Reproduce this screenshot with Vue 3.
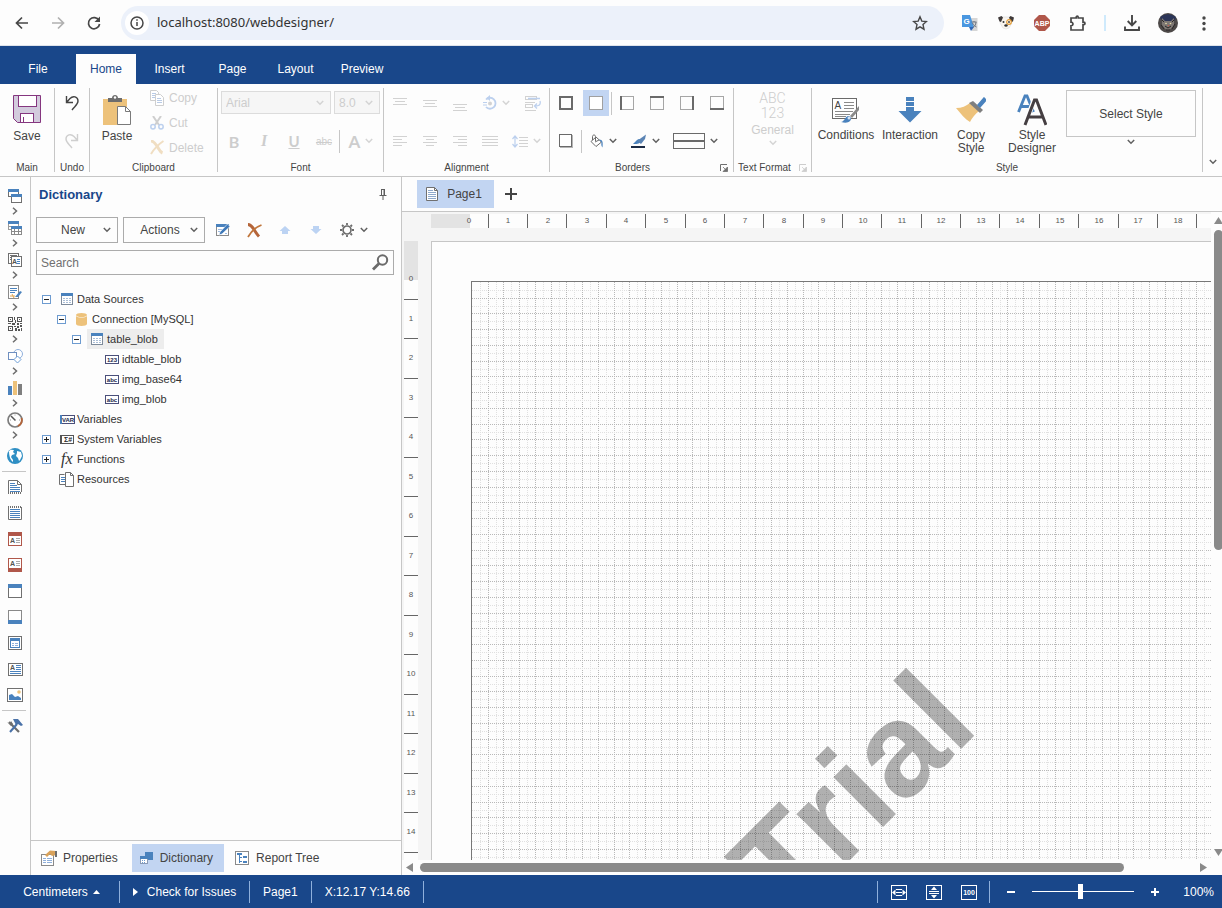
<script setup>
import { h, ref } from 'vue'

const box = (x, y, w, hh, c, f = 'none') =>
  `<rect x="${x + 0.5}" y="${y + 0.5}" width="${w - 1}" height="${hh - 1}" fill="${f}" stroke="${c}"/>`
const bar = (x, y, w, hh, c) => `<rect x="${x}" y="${y}" width="${w}" height="${hh}" fill="${c}"/>`
const rows = (list, c) => list.map(([x, y, w]) => bar(x, y, w, 1, c)).join('')
const tiny = (x, y, t, c, s = 7, extra = '') =>
  `<text x="${x}" y="${y}" font-family="Liberation Sans, Arial, sans-serif" font-size="${s}" font-weight="bold" fill="${c}" ${extra}>${t}</text>`

const G = '#707070'
const B = '#4a82bd'
const D = '#d2d2d2'
const cell = (sides) => box(0, 0, 14, 14, '#a6a6a6') + sides

const icons = {
  back: [16, 16, '<path d="M14 8H3M8 2.5 2.5 8 8 13.5" fill="none" stroke="#474747" stroke-width="1.7"/>'],
  forward: [16, 16, '<path d="M2 8h11M8 2.5 13.500 8 8 13.500" fill="none" stroke="#b0b0b0" stroke-width="1.700"/>'],
  reload: [16, 16, '<path d="M13 5.500A5.600 5.600 0 1 0 13.600 9" fill="none" stroke="#474747" stroke-width="1.700"/><path d="M14 1.500V7H8.500z" fill="#474747"/>'],
  info: [24, 24, '<circle cx="12" cy="12" r="12" fill="#fff"/><circle cx="12" cy="12" r="6" fill="none" stroke="#474747" stroke-width="1.500"/><path d="M12 11v4M12 8.200v1.600" stroke="#474747" stroke-width="1.500"/>'],
  star: [16, 16, '<path d="M8 1.800l1.800 4.300 4.700.4-3.500 3.100 1 4.600L8 11.800l-4 2.400 1-4.600L1.500 6.500l4.700-.4z" fill="none" stroke="#474747" stroke-width="1.400"/>'],
  translate: [18, 18, '<path d="M7 4h9.500v13H11z" fill="#d6d6d6"/><path d="M1 1h8l4 12H1z" fill="#4a97e0"/><path d="M8 13h5l-3 4z" fill="#3367b5"/><path d="M10.500 8h5M13 7v1M15 8c0 3-2 5-3 5M11.500 9c1 2 2 3 4 4" stroke="#6d7480" fill="none"/>' + tiny(2.5, 10, 'G', '#fff', 8)],
  dog: [18, 18, '<path d="M5 3h8l2 6-3 5-3 1-3-1-3-5z" fill="#f8f4ee" stroke="#ddd" stroke-width=".6"/><path d="M1 3.500 4.500 2 6 3.500 4 8 2.500 7.500zM17 3.500 13.500 2 12 3.500 14 8l2-.5z" fill="#3f3a3a"/><circle cx="12" cy="8" r="2.300" fill="#fff" stroke="#e39b32" stroke-width="1.200"/><circle cx="6.500" cy="8" r="1" fill="#333"/><circle cx="12" cy="8" r=".9" fill="#333"/><ellipse cx="9" cy="11.500" rx="1.700" ry="1.200" fill="#333"/>'],
  abp: [16, 16, '<path d="M5 0h6l5 5v6l-5 5H5l-5-5V5z" fill="#b0574a"/>' + tiny(8, 10.5, 'ABP', '#fff', 7, 'text-anchor="middle"')],
  puzzle: [18, 18, '<path d="M2 4h5.200v-.8a1 1 0 0 1 2 0V4H14v4.200h.8a1.200 1.200 0 0 1 0 2.400H14V16H2v-4.200c2.600 0 2.600-3.600 0-3.600z" fill="none" stroke="#474747" stroke-width="1.700"/>'],
  download: [16, 18, '<path d="M8 1v10M3.700 7 8 11.300 12.300 7M1 12.500V16h14v-3.500" fill="none" stroke="#474747" stroke-width="1.900"/>'],
  avatar: [20, 20, '<circle cx="10" cy="10" r="10" fill="#4d4948"/><path d="M2 5C5 0 15 0 18 5l-2 3H5z" fill="#2b3558"/><path d="M4 5l3 3h6l3-3 0 7-3 4-3 1-3-1-3-4z" fill="#7d7773"/><path d="M3 12l3 4M17 11l-3 5M7 13l3 2 3-2M8 17h4M6 9l-2-2M14 9l2-2" stroke="#2a2727" fill="none"/><circle cx="8" cy="10.500" r=".8" fill="#eadfae"/><circle cx="12.500" cy="10.500" r=".8" fill="#eadfae"/><path d="M9.500 12h2l-1 1.500z" fill="#c45645"/>'],
  dots: [4, 16, '<circle cx="2" cy="3" r="1.700" fill="#474747"/><circle cx="2" cy="8.500" r="1.700" fill="#474747"/><circle cx="2" cy="14" r="1.700" fill="#474747"/>'],
  chev: [8, 6, '<path d="M.8 1 4 4.200 7.200 1" fill="none" stroke="currentColor" stroke-width="1.500" stroke-opacity=".85"/>'],
  chevRight: [6, 8, '<path d="M1 .8 4.500 4 1 7.200" fill="none" stroke="#6d6d6d" stroke-width="1.500"/>'],

  save: [28, 28, '<path d="M.5.5h27v27h-23l-4-4z" fill="#d3cbdd" stroke="#85367f"/><rect x="5.500" y=".5" width="18" height="11" fill="#fff" stroke="#85367f"/><rect x="7.500" y="18.500" width="13" height="9" fill="#fff" stroke="#85367f"/><path d="M10.500 22v5" stroke="#85367f"/>'],
  undo: [14, 16, '<path d="M1.500 1v6.500H8M1.500 7.500 5 3.500C8 .5 13 1.500 13 6c0 3.500-3 5-6 9" fill="none" stroke="#444" stroke-width="1.400"/>'],
  redo: [14, 16, '<path d="M12.500 1v6.500H6M12.500 7.500 9 3.500C6 .5 1 1.500 1 6c0 3.500 3 5 6 9" fill="none" stroke="#cfcfcf" stroke-width="1.400"/>'],
  paste: [28, 32, '<path d="M0 5h24v26H0z" fill="#edc27b"/><path d="M5 8V4h4c0-4 6-4 6 0h4v4z" fill="#6d6d6d"/><circle cx="12" cy="3.500" r="1.200" fill="#fff"/><path d="M14.500 12.500h8l5 5v13h-13z" fill="#fff" stroke="#7a7a7a"/><path d="M22.500 12.500v5h5" fill="none" stroke="#7a7a7a"/>'],
  copy: [14, 16, '<path d="M.5.500h6l2 2v8h-8z" fill="#fff" stroke="#cfcfcf"/><path d="M5.500 4.500h5l3 3v8h-8z" fill="#fff" stroke="#cfcfcf"/>' + rows([[2, 3, 4], [2, 5, 3], [2, 7, 3], [7, 8, 4], [7, 10, 5], [7, 12, 5]], '#b9cbe6')],
  cut: [14, 14, '<path d="M3 0 9 9M11 0 5 9" stroke="#cfcfcf" stroke-width="2"/><circle cx="3" cy="10.700" r="2.200" fill="none" stroke="#bcd0ee" stroke-width="1.500"/><circle cx="11" cy="10.700" r="2.200" fill="none" stroke="#bcd0ee" stroke-width="1.500"/>'],
  del: [14, 15, '<path d="M1 1c2 0 4 2 6 5s3 6 5.500 7" stroke="#f0dec2" stroke-width="3" fill="none"/><path d="M13.500 1C9 4 4 9 1 14" stroke="#f0dec2" stroke-width="2" fill="none"/>'],
  remove: [15, 15, '<path d="M1 1.500c3 0 4 2 6 5s3 5 5 7" stroke="#b5653a" stroke-width="3" fill="none"/><path d="M14.500 2C9 4 4 9 1 14" stroke="#c0763c" stroke-width="1.800" fill="none"/>'],

  top: [14, 9, rows([[0, 1, 14], [2, 4, 10], [0, 7, 14]], D)],
  left: [14, 12, rows([[0, 1, 14], [0, 4, 9], [0, 7, 14], [0, 10, 9]], D)],
  center: [14, 12, rows([[0, 1, 14], [3, 4, 8], [0, 7, 14], [3, 10, 8]], D)],
  right: [14, 12, rows([[0, 1, 14], [5, 4, 9], [0, 7, 14], [5, 10, 9]], D)],
  justify: [16, 12, rows([[0, 1, 16], [0, 4, 16], [0, 7, 16], [0, 10, 16]], D)],
  rotate: [14, 16, '<path d="M3 4.500A5.500 5.500 0 1 1 3 12" fill="none" stroke="#bcd0ee" stroke-width="1.800"/><path d="M7 0v6L3.500 3z" fill="#bcd0ee"/><circle cx="7" cy="8.500" r="2" fill="#d2d2d2"/><path d="M0 7.500h4M0 10h4" stroke="#bcd0ee"/>'],
  wrap: [16, 15, box(0, 0, 12, 4, D) + rows([[0, 6, 10], [0, 14, 11]], D) + box(0, 8, 8, 4, D) + '<path d="M3 2.500h12M15 5c1 4-1 5-5 5M12 7.500 9.500 10l2.500 2.500" fill="none" stroke="#bcd0ee" stroke-width="1.300"/>'],
  spacing: [16, 13, rows([[7, 2, 9], [7, 5, 9], [7, 8, 9], [7, 11, 9]], D) + '<path d="M3 2v9M.500 4 3 1l2.500 3M.500 9 3 12l2.500-3" fill="none" stroke="#bcd0ee" stroke-width="1.200"/>'],

  bAll: [14, 14, '<rect x="1" y="1" width="12" height="12" fill="none" stroke="#6a6a6a" stroke-width="2"/>'],
  bNone: [14, 14, box(0, 0, 14, 14, '#a0a0a0', '#fff')],
  bLeft: [14, 14, cell(bar(0, 0, 2, 14, '#6a6a6a'))],
  bTop: [14, 14, cell(bar(0, 0, 14, 2, '#6a6a6a'))],
  bRight: [14, 14, cell(bar(12, 0, 2, 14, '#6a6a6a'))],
  bBottom: [14, 14, cell(bar(0, 12, 14, 2, '#6a6a6a'))],
  bShadow: [14, 14, bar(1, 12, 13, 2, '#b5b5b5') + bar(12, 1, 2, 13, '#b5b5b5') + box(0, 0, 13, 13, '#6a6a6a', '#fff')],
  bucket: [14, 14, '<path d="M1 7.500 6 3l5.500 5L6 12.500z" fill="#fff" stroke="#6a6a6a"/><path d="M2.500 6V2.500C2.500.500 5.500.500 5.500 2.500V7M5 8l4-2" fill="none" stroke="#6a6a6a"/><path d="M9 5.500c4 0 4 3 3.500 8-1-1-1.500-3-1-5z" fill="#4a82bd"/>'],
  pen: [16, 15, bar(0, 12, 14, 2, '#1c2b45') + '<path d="M2 10 6 6c2-2 4-1 4 .500C10 9 7 10.500 2 10z" fill="#4a82bd"/><path d="M6 7 15 .500 14 5l-4 5z" fill="#5b84b4"/>'],
  lineBox: [32, 16, box(0, 0, 32, 16, '#6a6a6a') + bar(0, 7, 32, 2, '#6a6a6a')],
  launch: [8, 8, '<path d="M.500 7V.500H7" fill="none" stroke="currentColor"/><path d="M3 3l3 3M7.500 3v4.500H3z" fill="currentColor" stroke="currentColor" stroke-width=".8"/>'],
  conditions: [28, 26, box(0, 1, 25, 21, '#6a6a6a', '#fff') + rows([[12, 5, 10], [12, 8, 10], [12, 11, 10], [3, 14, 18], [3, 17, 15], [3, 19, 11]], '#8a8a8a') + tiny(2.5, 11.5, 'A', '#444', 10, 'style="font-weight:normal"') + '<path d="M27 9 18 19l2 2 7-8z" fill="#8a8a8a"/><path d="M9 25c3 0 4-5 7-6 3 0 4 3 2 5s-5 2-9 1z" fill="#4a82bd"/><circle cx="17" cy="21" r="1.500" fill="#d9e6f5"/>'],
  interaction: [24, 26, bar(8, 0, 8, 4, B) + bar(8, 5, 8, 4, B) + '<path d="M8 10h8v4h7.500L12 25.500.500 14H8z" fill="#4a82bd"/>'],
  copyStyle: [30, 26, '<path d="M0 11c6 0 10-2 14-5l9 8c-4 3-7 7-9 11C9 22 5 17 0 11z" fill="#edc27b"/><path d="m13 6 4-2 10 9-3 3z" fill="#7f7f7f"/><path d="M22 8 28 1l2 2-6 7z" fill="#4a82bd" stroke="#4a82bd" stroke-width="1.500"/>'],
  styleDesigner: [30, 32, '<path d="M1.500 18 8 2h2l6.500 16M4 12.500h10" fill="none" stroke="#4a82bd" stroke-width="2.800"/><path d="M8 31.500 17 6h3l9 25.500M11 23h15" fill="none" stroke="#fff" stroke-width="5"/><path d="M8 31 17.500 6h2L29 31M11 23h15" fill="none" stroke="#453f42" stroke-width="3"/>'],

  bands: [14, 14, box(0, 0, 11, 8, G, '#fff') + bar(0, 0, 11, 3, B) + box(3, 5, 11, 9, G, '#fff') + bar(3, 5, 11, 3, B)],
  cross: [14, 14, box(0, 0, 11, 9, '#9a9a9a', '#fff') + bar(0, 0, 11, 3, B) + rows([[0, 5, 11]], '#9a9a9a') + box(3, 5, 11, 9, '#8a8a8a', '#fff') + bar(3, 5, 11, 3, B) + bar(3, 10, 11, 1, '#8a8a8a') + bar(6, 8, 1, 6, '#8a8a8a') + bar(10, 8, 1, 6, '#8a8a8a')],
  component: [14, 14, box(0, 0, 11, 11, G, '#fff') + rows([[2, 2, 7], [2, 4, 2], [2, 6, 2]], G) + box(3, 3, 11, 11, G, '#fff') + tiny(4, 11, 'A', '#555', 7) + rows([[9, 6, 3], [9, 8, 3], [9, 10, 3]], B)],
  signature: [15, 14, box(0, 0, 11, 14, '#8a8a8a', '#fff') + rows([[2, 3, 7], [2, 5, 7], [2, 7, 5]], B) + '<path d="M2 11h5M4 9l2 4" stroke="#e0a550"/><path d="M7 12 12 6l2 1-4 5z" fill="#4a82bd"/>'],
  barcode: [14, 14, box(0, 0, 5, 5, '#555') + box(9, 0, 5, 5, '#555') + box(0, 9, 5, 5, '#555') + '<path d="M2 2h1v1H2zM11 2h1v1h-1zM2 11h1v1H2zM6 0h1v3H6zM7 3h1v3H7zM0 6h3v1H0zM4 6h3v2H4zM9 6h2v2H9zM12 6h2v1h-2zM6 9h2v1H6zM7 11h2v3H7zM9 9h2v2H9zM12 8h2v2h-2zM10 12h2v2h-2zM13 11h1v3h-1z" fill="#555"/>'],
  shapes: [15, 15, '<circle cx="10" cy="5" r="4.500" fill="#fff" stroke="#8fb0dc"/>' + '<rect x=".5" y="3.500" width="8" height="7" fill="#fff" stroke="#6f8fc0"/>' + '<path d="M9.500 7 13 10.500 9.500 14 6 10.500z" fill="#fff" stroke="#6fa0d8"/>'],
  chart: [14, 14, bar(0, 5, 4, 9, B) + bar(5, 0, 4, 14, '#edc27b') + bar(10, 3, 4, 11, '#7f7f7f')],
  gauge: [16, 16, '<circle cx="8" cy="8" r="7" fill="#fff" stroke="#7d7d7d" stroke-width="1.700"/><path d="M14.500 6A7 7 0 0 1 11 14" stroke="#b5653a" stroke-width="1.800" fill="none"/><path d="M4 4l4.500 4.500" stroke="#555" stroke-width="1.500"/><path d="M8 2.500v1M3 8h1M12 8h1" stroke="#999"/>'],
  globe: [16, 16, '<circle cx="8" cy="8" r="8" fill="#2f8fc4"/><path d="M2 3c2-2 4-1 5-1l-1 2 2 2-3 1-1 2 2 3v2c-3-2-4-7-4-11zM10 3l4 1 1 4-2 4-1 1-1-3-2-2 1-3z" fill="#fff"/>'],
  headerPage: [14, 14, '<path d="M.500 12V.500h9l4 4V12" fill="#fff" stroke="#707070"/><path d="M9.500.500v4h4" fill="none" stroke="#707070"/><path d="M0 13h14" stroke="#707070" stroke-dasharray="1 1" stroke-width="2"/>' + rows([[2, 3, 5], [2, 5, 7], [2, 7, 10], [2, 9, 10], [2, 11, 10]], B)],
  footerPage: [14, 14, '<path d="M.500 1v12.500h13V1" fill="#fff" stroke="#707070"/><path d="M0 1h14" stroke="#707070" stroke-dasharray="1 1" stroke-width="2"/>' + rows([[2, 3, 10], [2, 5, 10], [2, 7, 10], [2, 9, 10], [2, 11, 10]], B)],
  redHead: [14, 14, box(0, 0, 14, 14, '#b0574a', '#fff') + bar(0, 0, 14, 4, '#b0574a') + tiny(2, 11, 'A', '#555', 7) + rows([[8, 6, 4], [8, 8, 4], [8, 10, 4]], '#aaa')],
  redFoot: [14, 14, box(0, 0, 14, 14, '#b0574a', '#fff') + bar(0, 10, 14, 4, '#b0574a') + tiny(2, 8, 'A', '#555', 7) + rows([[8, 3, 4], [8, 5, 4], [8, 7, 4]], '#aaa')],
  blueHead: [14, 14, box(0, 0, 14, 14, G, '#fff') + bar(0, 0, 14, 4, B)],
  blueFoot: [14, 14, box(0, 0, 14, 14, '#8a8a8a', '#fff') + bar(0, 10, 14, 4, B)],
  dataBand: [14, 14, box(0, 0, 14, 14, G, '#fff') + bar(2, 2, 10, 3, B) + bar(2, 5, 1, 7, B) + bar(11, 5, 1, 7, B) + bar(2, 11, 10, 1, B) + rows([[4, 7, 2], [7, 7, 3], [4, 9, 2], [7, 9, 3]], '#8fb0dc')],
  textComp: [15, 13, box(0, 0, 15, 13, G, '#fff') + tiny(2, 7, 'A', '#555', 7) + rows([[8, 2, 5], [8, 4, 5], [8, 6, 5], [2, 8, 11], [2, 10, 11]], B)],
  image: [16, 14, box(0, 0, 16, 14, G, '#fff') + '<path d="M2 12V7l3-1 3 3 3-1 3 2v2z" fill="#4a82bd"/><circle cx="12" cy="4" r="1.800" fill="#edc27b"/>'],
  tools: [16, 14, '<path d="M2 3l10 10" stroke="#6d6d6d" stroke-width="2.200"/><path d="M0 3l3 2 1-3 2 3-2 2z" fill="#6d6d6d"/><path d="M3 13 10 5" stroke="#4a72a8" stroke-width="2"/><path d="M6 0h5l5 6-2 1-3-2-2 1z" fill="#4a72a8"/>'],

  pin: [8, 11, '<path d="M2.500 1v5M2 .500h4M5 1v5M.500 6.500h7M4 7v4" fill="none" stroke="#5e5e5e"/><path d="M5.500 1v5" stroke="#5e5e5e"/>'],
  edit: [14, 14, box(0, 1, 13, 12, '#8a8a8a', '#fff') + bar(0, 1, 13, 3, B) + rows([[2, 6, 5], [2, 8, 4], [9, 10, 2]], '#9dbbe0') + '<path d="M3 12l1-3 7.500-8L14 3.500 6 11z" fill="#3f79b8" stroke="#fff" stroke-width=".6"/>'],
  up: [12, 8, '<path d="M6 0 11.500 5H9v3H3V5H.500z" fill="#bcd3f3"/>'],
  down: [12, 8, '<path d="M6 8 .500 3H3V0h6v3h2.500z" fill="#bcd3f3"/>'],
  gear: [14, 14, '<circle cx="7" cy="7" r="4" fill="none" stroke="#6d6d6d" stroke-width="1.700"/><path d="M7 0v2M7 12v2M0 7h2M12 7h2M2 2l1.500 1.500M10.500 10.500 12 12M12 2l-1.500 1.500M3.500 10.500 2 12" stroke="#6d6d6d" stroke-width="1.800"/>'],
  search: [17, 17, '<circle cx="10.500" cy="6" r="4.700" fill="none" stroke="#6b6b6b" stroke-width="2"/><path d="M7 9.500 1 15.500" stroke="#6b6b6b" stroke-width="2.800"/>'],
  minus: [9, 9, box(0, 0, 9, 9, '#6d9bd0', '#fff') + bar(2, 4, 5, 1, '#222')],
  plus: [9, 9, box(0, 0, 9, 9, '#6d9bd0', '#fff') + bar(2, 4, 5, 1, '#222') + bar(4, 2, 1, 5, '#222')],
  table: [12, 12, box(0, 0, 12, 12, '#7d8a9a', '#fff') + bar(0, 0, 12, 3, B) + [5, 7, 9].map((y) => rows([[2, y, 2], [5, y, 2], [8, y, 2]], '#a9bdd6')).join('')],
  db: [12, 13, '<path d="M0 3v8c0 2.500 11 2.500 11 0V3c-2 2-9 2-11 0z" fill="#edc27b"/><ellipse cx="5.500" cy="2" rx="5.500" ry="2" fill="#edc27b"/>'],
  t123: [14, 9, box(0, 0, 14, 9, '#4a4f7a', '#fff') + tiny(7, 7, '123', '#22264a', 6, 'text-anchor="middle"')],
  tabc: [14, 9, box(0, 0, 14, 9, '#4a4f7a', '#fff') + tiny(7, 7, 'abc', '#22264a', 6, 'text-anchor="middle"')],
  tvar: [15, 9, box(0, 0, 15, 9, '#4a4f7a', '#fff') + bar(0, 0, 2, 9, B) + tiny(8, 7, 'VAR', '#22264a', 6, 'text-anchor="middle"')],
  tsys: [14, 9, box(0, 0, 14, 9, '#555', '#fff') + bar(0, 0, 2, 9, '#555') + tiny(8, 7, 'Σ#', '#222', 7, 'text-anchor="middle"')],
  fx: [16, 20, '<text x="2" y="15" font-family="Liberation Serif, Times New Roman, serif" font-style="italic" font-size="16" fill="#333">fx</text>'],
  resources: [16, 15, '<path d="M5.500 2.500h-5v10h7" fill="#fff" stroke="#707070"/>' + rows([[2, 5, 4], [2, 7, 4], [2, 9, 4]], B) + '<path d="M6.500.500h5l3 3v11h-8z" fill="#fff" stroke="#707070"/><path d="M11.500.500v3h3" fill="none" stroke="#707070"/>'],
  page: [12, 14, '<path d="M.500.500h8l3 3v10H.500z" fill="#fff" stroke="#707070"/><path d="M8.500.500v3h3" fill="none" stroke="#707070"/>' + rows([[2, 3, 5], [2, 5, 8], [2, 7, 8], [2, 9, 8], [2, 11, 8]], '#8fa9cc')],
  add: [12, 12, bar(5, 0, 2, 12, '#444') + bar(0, 5, 12, 2, '#444')],
  properties: [16, 16, box(0, 4, 13, 12, '#8a8a8a', '#fff') + rows([[2, 8, 3], [6, 8, 5], [2, 10, 3], [6, 10, 5], [2, 12, 3], [6, 12, 5]], '#8fb0dc') + '<path d="M4 5 9 .500 15 1v4l-4 1-2-2-3 3z" fill="#d9a25a"/><path d="M14 1h2v6h-2z" fill="#6d6d6d"/>'],
  dictionary: [13, 13, bar(5, 0, 8, 7, B) + box(5, 0, 8, 8, B) + box(0, 4, 8, 8, '#8a9ab5', '#fff') + bar(0, 4, 8, 3, B) + rows([[2, 8, 1], [4, 8, 1], [2, 10, 1], [4, 10, 1]], '#6d9bd0')],
  tree: [14, 14, box(0, 0, 14, 14, '#8a8a8a', '#fff') + bar(2, 2, 5, 2, B) + bar(4, 4, 1, 8, B) + bar(4, 6, 3, 1, B) + bar(4, 10, 3, 1, B) + bar(8, 5, 4, 2, B) + bar(8, 10, 4, 2, B)],

  caretUp: [7, 4, '<path d="M0 4 3.500 0 7 4z" fill="#fff"/>'],
  caretRight: [5, 8, '<path d="M0 0 5 4 0 8z" fill="#fff"/>'],
  fitWidth: [16, 16, box(0, 1, 16, 15, '#fff') + rows([[5, 5, 6], [5, 8, 6], [5, 11, 6]], '#fff') + '<path d="M4.500 5.500v6L1 8.500zM11.500 5.500v6L15 8.500z" fill="#fff"/>'],
  fitPage: [16, 16, box(0, 1, 16, 15, '#fff') + rows([[3, 7, 10], [3, 9, 10]], '#fff') + '<path d="M5 6h6L8 2.500zM5 11h6l-3 3.500z" fill="#fff"/>'],
  zoom100: [16, 16, box(0, 1, 16, 15, '#fff') + tiny(8, 11, '100', '#fff', 7, 'text-anchor="middle"')],
  zoomOut: [8, 8, bar(0, 3, 8, 2, '#fff')],
  zoomIn: [8, 8, bar(0, 3, 8, 2, '#fff') + bar(3, 0, 2, 8, '#fff')],
  sUp: [9, 7, '<path d="M0 7 4.500 0 9 7z" fill="#8a8a8a"/>'],
  sDown: [9, 7, '<path d="M0 0h9L4.500 7z" fill="#8a8a8a"/>'],
  sLeft: [7, 9, '<path d="M7 0v9L0 4.500z" fill="#8a8a8a"/>'],
  sRight: [7, 9, '<path d="M0 0v9l7-4.500z" fill="#8a8a8a"/>'],
}

const Ic = (props) => {
  const [w, hh, body] = icons[props.n]
  return h('svg', { class: 'ic', width: w, height: hh, viewBox: `0 0 ${w} ${hh}`, 'aria-hidden': 'true', innerHTML: body })
}
Ic.props = ['n']

const menu = ['File', 'Home', 'Insert', 'Page', 'Layout', 'Preview']
const insertTools = ['bands', 'cross', 'component', 'signature', 'barcode', 'shapes', 'chart', 'gauge']
const bandTools = ['headerPage', 'footerPage', 'redHead', 'redFoot', 'blueHead', 'blueFoot', 'dataBand', 'textComp', 'image']
const tree = [
  { level: 0, toggle: 'minus', icon: 'table', text: 'Data Sources' },
  { level: 1, toggle: 'minus', icon: 'db', text: 'Connection [MySQL]' },
  { level: 2, toggle: 'minus', icon: 'table', text: 'table_blob', on: true },
  { level: 3, icon: 't123', text: 'idtable_blob' },
  { level: 3, icon: 'tabc', text: 'img_base64' },
  { level: 3, icon: 'tabc', text: 'img_blob' },
  { level: 0, icon: 'tvar', text: 'Variables' },
  { level: 0, toggle: 'plus', icon: 'tsys', text: 'System Variables' },
  { level: 0, toggle: 'plus', icon: 'fx', text: 'Functions' },
  { level: 0, icon: 'resources', text: 'Resources' },
]

const ruler = (count, cm) =>
  Array.from({ length: count }, (_, i) => ({ n: i, label: Math.round(i * cm), tick: Math.round((i + 0.5) * cm) }))
const marksX = ruler(19, 39.37)
const marksY = ruler(15, 39.5)
const gridLines = Array.from({ length: 300 }, (_, i) => ({ at: Math.round((i + 1) * 7.874) + 0.5, major: i % 2 === 1 }))

const url = ref('localhost:8080/webdesigner/')
const query = ref('')
const zoom = ref(47)
</script>

<template>
  <div class="app">
    <header class="browser">
      <button class="nav" aria-label="Back"><Ic n="back" /></button>
      <button class="nav" aria-label="Forward"><Ic n="forward" /></button>
      <button class="nav" aria-label="Reload"><Ic n="reload" /></button>
      <div class="address">
        <Ic n="info" />
        <input v-model="url" type="text" aria-label="Address" />
        <button class="nav" aria-label="Bookmark"><Ic n="star" /></button>
      </div>
      <button class="nav" aria-label="Translate"><Ic n="translate" /></button>
      <button class="nav" aria-label="Dog extension"><Ic n="dog" /></button>
      <button class="nav" aria-label="Ad blocker"><Ic n="abp" /></button>
      <button class="nav" aria-label="Extensions"><Ic n="puzzle" /></button>
      <span class="nav-sep"></span>
      <button class="nav" aria-label="Downloads"><Ic n="download" /></button>
      <button class="nav" aria-label="Profile"><Ic n="avatar" /></button>
      <button class="nav" aria-label="Browser menu"><Ic n="dots" /></button>
    </header>

    <nav class="menu">
      <button v-for="m in menu" :key="m" :class="{ on: m === 'Home', file: m === 'File', preview: m === 'Preview' }">{{ m }}</button>
    </nav>

    <div class="ribbon">
      <section class="group g-main">
        <div class="body"><button class="big"><Ic n="save" /><span>Save</span></button></div>
        <h2>Main</h2>
      </section>
      <i class="sep"></i>
      <section class="group g-undo">
        <div class="body col">
          <button class="cell" aria-label="Undo"><Ic n="undo" /></button>
          <button class="cell" aria-label="Redo" disabled><Ic n="redo" /></button>
        </div>
        <h2>Undo</h2>
      </section>
      <i class="sep"></i>
      <section class="group g-clip">
        <div class="body">
          <button class="big"><Ic n="paste" /><span>Paste</span></button>
          <div class="clip-list">
            <button disabled><Ic n="copy" />Copy</button>
            <button disabled><Ic n="cut" />Cut</button>
            <button disabled><Ic n="del" />Delete</button>
          </div>
        </div>
        <h2>Clipboard</h2>
      </section>
      <i class="sep"></i>
      <section class="group g-font">
        <div class="body col">
          <div class="line selects">
            <div class="pick wide"><select aria-label="Font name" disabled><option>Arial</option></select><Ic n="chev" /></div>
            <div class="pick"><select aria-label="Font size" disabled><option>8.0</option></select><Ic n="chev" /></div>
          </div>
          <div class="line dim">
            <button class="cell f-b" disabled>B</button>
            <button class="cell f-i" disabled>I</button>
            <button class="cell f-u" disabled>U</button>
            <button class="cell f-s" disabled>abc</button>
            <i class="vsep"></i>
            <button class="cell f-a" disabled>A<Ic n="chev" /></button>
          </div>
        </div>
        <h2>Font</h2>
      </section>
      <i class="sep"></i>
      <section class="group g-align">
        <div class="body col">
          <div class="line dim">
            <button class="cell v-top" aria-label="Align top" disabled><Ic n="top" /></button>
            <button class="cell" aria-label="Align middle" disabled><Ic n="top" /></button>
            <button class="cell v-bot" aria-label="Align bottom" disabled><Ic n="top" /></button>
            <button class="cell drop" aria-label="Text angle" disabled><Ic n="rotate" /><Ic n="chev" /></button>
            <button class="cell" aria-label="Word wrap" disabled><Ic n="wrap" /></button>
          </div>
          <div class="line dim">
            <button class="cell" aria-label="Align left" disabled><Ic n="left" /></button>
            <button class="cell" aria-label="Align centre" disabled><Ic n="center" /></button>
            <button class="cell" aria-label="Align right" disabled><Ic n="right" /></button>
            <button class="cell" aria-label="Justify" disabled><Ic n="justify" /></button>
            <button class="cell drop" aria-label="Line spacing" disabled><Ic n="spacing" /><Ic n="chev" /></button>
          </div>
        </div>
        <h2>Alignment</h2>
      </section>
      <i class="sep"></i>
      <section class="group g-borders">
        <div class="body col">
          <div class="line">
            <button class="cell" aria-label="All borders"><Ic n="bAll" /></button>
            <button class="cell picked" aria-label="No border"><Ic n="bNone" /></button>
            <i class="vsep"></i>
            <button class="cell" aria-label="Left border"><Ic n="bLeft" /></button>
            <button class="cell" aria-label="Top border"><Ic n="bTop" /></button>
            <button class="cell" aria-label="Right border"><Ic n="bRight" /></button>
            <button class="cell" aria-label="Bottom border"><Ic n="bBottom" /></button>
          </div>
          <div class="line">
            <button class="cell" aria-label="Shadow"><Ic n="bShadow" /></button>
            <i class="vsep"></i>
            <button class="cell drop" aria-label="Fill colour"><Ic n="bucket" /><Ic n="chev" /></button>
            <button class="cell drop" aria-label="Border colour"><Ic n="pen" /><Ic n="chev" /></button>
            <button class="cell drop style" aria-label="Border style"><Ic n="lineBox" /><Ic n="chev" /></button>
          </div>
        </div>
        <h2><span>Borders</span><button class="launch" aria-label="Border settings"><Ic n="launch" /></button></h2>
      </section>
      <i class="sep"></i>
      <section class="group g-format">
        <div class="body">
          <button class="format" disabled>
            <b>ABC</b><b>123</b><span>General</span><Ic n="chev" />
          </button>
        </div>
        <h2><span>Text Format</span><button class="launch off" aria-label="Format settings" disabled><Ic n="launch" /></button></h2>
      </section>
      <i class="sep"></i>
      <section class="group g-style">
        <div class="body">
          <button class="big"><Ic n="conditions" /><span>Conditions</span></button>
          <button class="big"><Ic n="interaction" /><span>Interaction</span></button>
          <button class="big copy"><Ic n="copyStyle" /><span>Copy<br />Style</span></button>
          <button class="big"><Ic n="styleDesigner" /><span>Style<br />Designer</span></button>
          <div class="select-style">
            <button class="style-box">Select Style</button>
            <button class="style-more" aria-label="More styles"><Ic n="chev" /></button>
          </div>
        </div>
        <h2>Style</h2>
      </section>
      <i class="sep"></i>
      <button class="collapse" aria-label="Collapse ribbon"><Ic n="chev" /></button>
    </div>

    <main class="work">
      <aside class="toolbox">
        <button v-for="t in insertTools" :key="t" class="tool" :aria-label="t"><span><Ic :n="t" /></span><Ic n="chevRight" /></button>
        <button class="tool globe" aria-label="Map"><Ic n="globe" /></button>
        <hr />
        <button v-for="t in bandTools" :key="t" class="band" :aria-label="t"><Ic :n="t" /></button>
        <hr />
        <button class="band" aria-label="Setup toolbox"><Ic n="tools" /></button>
      </aside>

      <section class="panel">
        <div class="panel-title"><h1>Dictionary</h1><button aria-label="Pin panel"><Ic n="pin" /></button></div>
        <div class="panel-bar">
          <button class="menu-btn"><span>New</span><Ic n="chev" /></button>
          <button class="menu-btn"><span>Actions</span><Ic n="chev" /></button>
          <button class="act" aria-label="Edit"><Ic n="edit" /></button>
          <button class="act" aria-label="Delete"><Ic n="remove" /></button>
          <button class="act" aria-label="Move up" disabled><Ic n="up" /></button>
          <button class="act" aria-label="Move down" disabled><Ic n="down" /></button>
          <button class="act settings" aria-label="Settings"><Ic n="gear" /><Ic n="chev" /></button>
        </div>
        <div class="search">
          <input v-model="query" type="text" placeholder="Search" aria-label="Search" />
          <button aria-label="Find"><Ic n="search" /></button>
        </div>
        <ul class="tree">
          <li v-for="r in tree" :key="r.text" :class="'level-' + r.level">
            <span class="toggle"><Ic v-if="r.toggle" :n="r.toggle" /></span>
            <span class="node" :class="{ on: r.on }"><span class="node-icon"><Ic :n="r.icon" /></span>{{ r.text }}</span>
          </li>
        </ul>
        <div class="tabs">
          <button><Ic n="properties" />Properties</button>
          <button class="on"><Ic n="dictionary" />Dictionary</button>
          <button><Ic n="tree" />Report Tree</button>
        </div>
      </section>

      <section class="designer">
        <div class="pages">
          <button class="page-tab"><Ic n="page" />Page1</button>
          <button class="page-add" aria-label="Add page"><Ic n="add" /></button>
        </div>
        <div class="stage">
          <div class="view">
            <svg class="ruler-x">
              <rect width="39" height="14" fill="#e3e3e3" />
              <g v-for="m in marksX" :key="m.n">
                <text :x="m.label + 38" y="9">{{ m.n }}</text>
                <rect :x="m.tick + 37" y="0" width="1" height="14" />
              </g>
            </svg>
            <svg class="ruler-y">
              <rect width="14" height="39" fill="#e3e3e3" />
              <g v-for="m in marksY" :key="m.n">
                <text x="7" :y="m.label + 40">{{ m.n }}</text>
                <rect x="0" :y="m.tick + 38" width="14" height="1" />
              </g>
            </svg>
            <div class="sheet">
              <svg class="sheet-body">
                <g>
                  <template v-for="l in gridLines" :key="l.at">
                    <line :class="{ major: l.major }" :x1="l.at" y1="0" :x2="l.at" y2="100%" />
                    <line :class="{ major: l.major }" x1="0" :y1="l.at" x2="100%" :y2="l.at" />
                  </template>
                </g>
                <text class="mark" transform="translate(509 447) rotate(-45)">Trial</text>
              </svg>
            </div>
          </div>
          <div class="scroll-y"><Ic n="sUp" /><span></span><Ic n="sDown" /></div>
          <div class="scroll-x"><Ic n="sLeft" /><div><span></span></div><Ic n="sRight" /></div>
        </div>
      </section>
    </main>

    <footer class="status">
      <button class="units">Centimeters<Ic n="caretUp" /></button>
      <i></i>
      <button class="issues"><Ic n="caretRight" />Check for Issues</button>
      <i></i>
      <span class="crumb">Page1</span>
      <i></i>
      <span class="crumb">X:12.17 Y:14.66</span>
      <i></i>
      <div class="spacer"></div>
      <i></i>
      <div class="fits">
        <button aria-label="Fit width"><Ic n="fitWidth" /></button>
        <button aria-label="Fit page"><Ic n="fitPage" /></button>
        <button aria-label="Actual size"><Ic n="zoom100" /></button>
      </div>
      <i></i>
      <button class="step" aria-label="Zoom out"><Ic n="zoomOut" /></button>
      <input v-model="zoom" class="slider" type="range" min="0" max="100" aria-label="Zoom" />
      <button class="step" aria-label="Zoom in"><Ic n="zoomIn" /></button>
      <span class="percent">100%</span>
    </footer>
  </div>
</template>

<style>
body {
  overflow: hidden;
  background: #fdfdfd;
}
</style>

<style scoped>
.app {
  height: 100vh;
  display: flex;
  flex-direction: column;
  font-family: 'Liberation Sans', Arial, sans-serif;
  font-size: 12px;
  color: #444;
  background: #fdfdfd;
}
button {
  display: flex;
  align-items: center;
  justify-content: center;
  padding: 0;
  border: 0;
  background: none;
  font: inherit;
  color: inherit;
}
.ic { flex: none; display: block; }

.browser {
  flex: none;
  display: flex;
  align-items: center;
  height: 45px;
  padding-left: 4px;
  border-bottom: 1px solid #dfe3ea;
}
.nav { flex: none; width: 36px; height: 36px; }
.nav-sep { flex: none; width: 2px; height: 16px; margin: 0 8px; background: #cfeafc; }
.address {
  flex: 1;
  display: flex;
  align-items: center;
  height: 34px;
  margin: 0 8px 0 9px;
  padding: 0 6px 0 4px;
  border-radius: 17px;
  background: #ecf1fa;
}
.address input {
  flex: 1;
  min-width: 0;
  height: 18px;
  margin: 0 0 2px 8px;
  padding: 0;
  border: 0;
  outline: 0;
  background: none;
  font-family: 'Noto Sans', 'Open Sans', sans-serif;
  font-size: 13px;
  color: #333;
}

.menu {
  flex: none;
  display: flex;
  align-items: flex-end;
  height: 38px;
  background: #19478a;
}
.menu button { width: 63px; height: 30px; color: #fff; }
.menu button.file { width: 76px; }
.menu button.on { width: 60px; margin-right: 2px; color: #19478a; background: #fdfdfd; }
.menu button.preview { width: 70px; }

.ribbon {
  flex: none;
  display: flex;
  height: 92px;
  border-bottom: 1px solid #c6c6c6;
}
.sep { flex: none; width: 1px; height: 84px; margin-top: 4px; background: #c6c6c6; }
.group { flex: none; display: flex; flex-direction: column; }
.group h2 {
  display: flex;
  justify-content: center;
  align-items: center;
  height: 15px;
  margin: 0;
  font-size: 10px;
  font-weight: normal;
}
.body { display: flex; height: 76px; }
.col { flex-direction: column; }
.g-main { width: 54px; }
.g-undo { width: 34px; }
.g-clip { width: 127px; }
.g-font, .g-align { width: 165px; }
.g-borders { width: 183px; }
.g-format { width: 77px; }
.g-style { flex: 1; }
.big {
  flex-direction: column;
  justify-content: flex-start;
  width: 54px;
  height: 76px;
  padding-top: 11px;
  line-height: 13px;
  text-align: center;
}
.big span { margin-top: 7px; }
.g-clip .big { padding-top: 10px; }
.g-clip .big span { margin-top: 4px; }
.g-undo .cell { width: 34px; }
.cell { flex: none; width: 30px; height: 38px; }
.line { display: flex; align-items: center; height: 38px; padding-left: 1px; }
.vsep { flex: none; width: 1px; height: 23px; background: #c6c6c6; }
.clip-list { padding-left: 6px; padding-top: 1px; }
.clip-list button { justify-content: flex-start; gap: 5px; height: 25px; color: #cdcdcd; }
.dim { color: #cdcdcd; }

.selects { gap: 3px; padding: 0 0 0 3px; align-items: flex-start; box-sizing: border-box; padding-top: 7px; }
.pick { position: relative; width: 46px; color: #cdcdcd; }
.pick.wide { width: 110px; }
.pick select {
  display: block;
  width: 100%;
  height: 23px;
  padding: 0 4px;
  appearance: none;
  border: 1px solid #dcdcdc;
  border-radius: 0;
  background: #f6f6f6;
  font: inherit;
  color: #cdcdcd;
  opacity: 1;
}
.pick .ic { position: absolute; right: 7px; top: 9px; }
.f-b { font: bold 16px Lato, sans-serif; }
.f-i { font: italic bold 16px 'Liberation Serif', serif; }
.f-u { font: bold 15px Lato, sans-serif; text-decoration: underline; }
.f-s { font-size: 10px; text-decoration: line-through; }
.f-a { width: 42px; gap: 5px; font: bold 17px Lato, sans-serif; }

.v-top { padding-bottom: 4px; }
.v-bot { padding-top: 8px; }
.drop { width: 42px; gap: 5px; }
.g-align .drop { width: 43px; }
.picked { width: 26px; height: 26px; margin: 0 2px; background: #c2d5f2; }
.drop.style { width: 58px; }
.group.g-borders h2, .group.g-format h2 { display: grid; grid-template-columns: 1fr 18px; text-align: center; }
.group.g-format h2 { grid-template-columns: 1fr 16px; }
.launch { height: 15px; color: #707070; }
.launch.off { color: #cdcdcd; }

.format { flex-direction: column; justify-content: flex-start; width: 77px; padding-top: 7px; color: #cdcdcd; }
.format b { font: 300 14px/15px Roboto, 'Liberation Sans', sans-serif; }
.format span { margin-top: 2px; line-height: 14px; }
.format .ic { margin-top: 3px; }

.g-style .big { width: 64px; padding-top: 6px; }
.g-style .big.copy { width: 58px; }
.g-style .big .ic { margin: auto 0; }
.g-style .big span { margin-top: 0; height: 31px; }
.g-style .body { padding-left: 2px; }
.select-style { flex: 1; padding: 6px 6px 0 2px; }
.style-box { width: 100%; height: 47px; border: 1px solid #c6c6c6; }
.style-more { width: 100%; height: 10px; }
.collapse { flex: none; width: 19px; align-items: flex-end; padding-bottom: 11px; }

.work { flex: 1; display: flex; min-height: 0; }
.toolbox {
  flex: none;
  display: flex;
  flex-direction: column;
  width: 30px;
  padding-top: 11px;
  border-right: 1px solid #c6c6c6;
}
.tool { flex: none; flex-direction: column; justify-content: flex-start; height: 32px; gap: 3px; }
.tool span { display: flex; align-items: center; height: 16px; }
.tool.globe { height: 25px; padding-top: 4px; }
.toolbox hr { flex: none; width: 24px; height: 1px; margin: 2px 0 2px 2px; border: 0; background: #c6c6c6; }
.band { flex: none; height: 26px; }

.panel { flex: none; display: flex; flex-direction: column; width: 370px; border-right: 1px solid #c6c6c6; }
.panel-title { display: flex; justify-content: space-between; align-items: center; height: 34px; padding: 0 14px 0 8px; }
.panel-title h1 { margin: 0; font-size: 13px; color: #19478a; }
.panel-bar { display: flex; gap: 5px; padding: 6px 5px 0; }
.menu-btn { width: 82px; height: 26px; padding: 0 6px; border: 1px solid #ababab; }
.menu-btn span { flex: 1; }
.act { width: 26px; height: 26px; }
.act.settings { width: 34px; gap: 6px; margin-left: 3px; }
.search { display: flex; align-items: center; height: 23px; margin: 7px 7px 0 5px; border: 1px solid #ababab; }
.search input { flex: 1; min-width: 0; padding: 0 4px; border: 0; outline: 0; background: none; font: inherit; }
.search input::placeholder { color: #707070; opacity: 1; }
.search button { width: 26px; height: 23px; }

.tree { flex: 1; margin: 14px 0 0; padding: 0; list-style: none; font-size: 11px; color: #333; }
.tree li { display: flex; align-items: center; height: 20px; padding-left: 11px; }
.tree .level-1 { padding-left: 26px; }
.tree .level-2 { padding-left: 41px; }
.tree .level-3 { padding-left: 56px; }
.toggle { width: 9px; }
.node { display: flex; align-items: center; height: 20px; margin-left: 6px; padding-right: 6px; }
.node.on { background: #ededed; }
.node-icon { display: flex; justify-content: center; width: 20px; }

.tabs { display: flex; gap: 3px; height: 31px; padding: 3px 5px 0 4px; border-top: 1px solid #c6c6c6; }
.tabs button { gap: 7px; height: 28px; padding: 0 11px 0 8px; }
.tabs button:first-child { gap: 6px; padding-left: 6px; }
.tabs .on { background: #c2d5f2; }

.designer { flex: 1; display: flex; flex-direction: column; min-width: 0; }
.pages { flex: none; display: flex; align-items: center; height: 34px; padding-left: 15px; border-bottom: 1px solid #c6c6c6; }
.page-tab { gap: 9px; width: 77px; height: 28px; padding-right: 3px; background: #c2d5f2; }
.page-add { width: 34px; height: 28px; }
.stage {
  flex: 1;
  display: grid;
  grid-template-columns: minmax(0, 1fr) 11px;
  grid-template-rows: minmax(0, 1fr) 15px;
  min-height: 0;
}
.view {
  display: grid;
  grid-template-columns: 14px minmax(0, 1fr);
  grid-template-rows: 14px minmax(0, 1fr);
  gap: 13px;
  padding: 2px 0 0 2px;
  background: #f5f5f5;
  overflow: hidden;
}
.ruler-x { grid-column: 2; width: 100%; height: 14px; background: #fdfdfd; }
.ruler-y { grid-column: 1; width: 14px; height: 100%; background: #fdfdfd; }
.ruler-x text, .ruler-y text { font-size: 8px; text-anchor: middle; fill: #555; }
.ruler-x g rect, .ruler-y g rect { fill: #666; }
.sheet {
  display: flex;
  padding: 39px 0 0 39px;
  border-top: 1px solid #c6c6c6;
  border-left: 1px solid #c6c6c6;
  background: #fdfdfd;
  overflow: hidden;
}
.sheet-body {
  flex: 1;
  min-width: 0;
  height: 100%;
  box-sizing: border-box;
  border-top: 1px solid #777;
  border-left: 1px solid #777;
}
.sheet-body line { stroke: #e0e0e0; stroke-dasharray: 1 1; }
.sheet-body line.major { stroke: #b8b8b8; }
.mark { font-size: 133px; font-weight: bold; text-anchor: end; fill: #000; fill-opacity: 0.3; }

.scroll-y { display: flex; flex-direction: column; align-items: center; padding: 5px 0 4px 4px; overflow: hidden; }
.scroll-y span { width: 9px; height: 50%; margin: 6px 0 auto; border-radius: 5px; background: #8a8a8a; }
.scroll-x { display: flex; align-items: center; padding: 0 4px; }
.scroll-x div { flex: 1; margin: 0 6px 0 7px; }
.scroll-x span { display: block; width: 91%; height: 9px; border-radius: 5px; background: #8a8a8a; }

.status {
  flex: none;
  display: flex;
  align-items: center;
  height: 33px;
  background: #19478a;
  color: #fff;
}
.status i { flex: none; width: 1px; height: 22px; background: #8fb0dc; }
.units { width: 119px; gap: 5px; padding-left: 4px; }
.issues { width: 129px; gap: 9px; }
.crumb { padding: 0 13px; }
.spacer { flex: 1; }
.fits { display: flex; gap: 19px; padding: 0 12px 0 13px; }
.step { width: 42px; height: 22px; }
.slider { width: 102px; height: 16px; margin: 0; appearance: none; background: linear-gradient(#fff, #fff) center / 100% 1px no-repeat; }
.slider::-webkit-slider-thumb { appearance: none; width: 5px; height: 15px; background: #fff; }
.percent { padding: 0 8px 0 7px; }
</style>
